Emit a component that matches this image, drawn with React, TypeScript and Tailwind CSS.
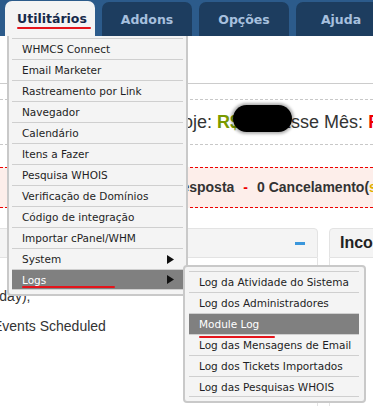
import React from 'react'

const menuItems = [
  'WHMCS Connect',
  'Email Marketer',
  'Rastreamento por Link',
  'Navegador',
  'Calendário',
  'Itens a Fazer',
  'Pesquisa WHOIS',
  'Verificação de Domínios',
  'Código de integração',
  'Importar cPanel/WHM',
]

const logItems = [
  'Log da Atividade do Sistema',
  'Log dos Administradores',
  'Module Log',
  'Log das Mensagens de Email',
  'Log dos Tickets Importados',
  'Log das Pesquisas WHOIS',
]

const tahoma = { fontFamily: '"DejaVu Sans", Verdana, sans-serif' }

function Arrow() {
  return (
    <svg width="7" height="9" viewBox="0 0 7 9">
      <polygon points="0,0 7,4.5 0,9" fill="#111" />
    </svg>
  )
}

function Tab({ label, active }: { label: string; active?: boolean }) {
  if (active) {
    return (
      <div className="relative h-[35px] w-[90px] shrink-0 rounded-t-[7px] bg-[#f4f4f4] pl-[12px] pt-[9px] text-[12.5px] font-bold text-[#16294a]">
        {label}
        {/* red marker stroke drawn over the screenshot */}
        <span className="absolute left-[12px] top-[26px] h-[2px] w-[74px] rounded-full bg-[#e5141b]" />
      </div>
    )
  }
  return (
    <div className="flex h-[34px] w-[90px] shrink-0 justify-center rounded-t-[7px] bg-[#1d3d5f] pt-[9px] text-[12.5px] font-bold text-[#a7c0de]">
      {label}
    </div>
  )
}

export default function App() {
  return (
    <div
      className="relative h-[406px] w-[373px] overflow-hidden bg-white text-[#333]"
      style={{ fontFamily: '"Liberation Sans", Arial, sans-serif' }}
    >
      {/* Top nav */}
      <nav className="flex h-[36px] items-end gap-[7px] bg-[#2c5b8b] pl-[5px]" style={tahoma}>
        <Tab label="Utilitários" active />
        <Tab label="Addons" />
        <Tab label="Opções" />
        <Tab label="Ajuda" />
      </nav>

      {/* Page content */}
      <div className="h-[48px] border-b border-[#cccccc]" />

      <div className="relative mt-[15px] h-[46px] whitespace-nowrap border-y border-dashed border-[#c8c8c8] pl-[105px] text-[18px] leading-[44px]">
        Vendas Hoje: <span className="font-bold text-[#7a9a00]">R$</span>
        <span className="inline-block w-[34px]" /> Esse Mês: <span className="font-bold text-[#e00]">R$</span>
        {/* redaction smudge */}
        <span className="absolute left-[233px] top-[5px] h-[27px] w-[59px] rounded-[14px] bg-black shadow-[0_0_3px_2px_rgba(0,0,0,0.3)]" />
      </div>

      <div className="mt-[22px] h-[41px] whitespace-nowrap border-y border-dashed border-[#e00] bg-[#fdeeea] pl-[85px] text-[14px] font-bold leading-[39px]">
        Aguardando Resposta
        <span className="mx-[9px] text-[#e00]">-</span>
        0 Cancelamento(<span className="text-[#e0b000]">s</span>)
      </div>

      <div className="-ml-[12px] mt-[20px] flex gap-[11px]">
        <div className="w-[330px] shrink-0">
          <div className="flex h-[30px] items-center justify-end rounded-t-[4px] border border-[#e3e3e3] bg-[#f4f4f4] pr-[12px]">
            <span className="h-[3px] w-[10px] bg-[#3a97dc]" />
          </div>
          <div className="h-[160px] border-x border-[#e3e3e3] pl-[4px] pt-[23px] text-[14px] leading-[30px]">
            <div className="-ml-[10px]">(0 day),</div>
            <div>Events Scheduled</div>
          </div>
        </div>
        <div className="w-[200px] shrink-0">
          <div className="flex h-[30px] items-center whitespace-nowrap rounded-t-[4px] border border-[#e3e3e3] bg-[#f4f4f4] pl-[10px] text-[16px] font-bold text-[#222]">
            Incompletos
          </div>
          <div className="h-[160px] border-x border-[#e3e3e3]" />
        </div>
      </div>

      {/* Utilitários dropdown */}
      <div
        className="absolute left-[7px] top-[36px] w-[181px] whitespace-nowrap rounded-b-[4px] border-x-2 border-b-2 border-[#c9c9c9] bg-[#f4f4f4] px-[3px] pb-[4px] pt-[2px] text-[10.5px] text-[#1e1e24]"
        style={tahoma}
      >
        {menuItems.map(item => (
          <div key={item} className="h-[21px] border-t border-[#cfcfcf] pl-[10px] leading-[20px]">
            {item}
          </div>
        ))}
        <div className="flex h-[21px] items-center justify-between border-t border-[#cfcfcf] pl-[10px] pr-[9px] leading-[20px]">
          System
          <Arrow />
        </div>
        <div className="relative flex h-[21px] items-center justify-between border-y border-[#cfcfcf] bg-[#808080] pl-[10px] pr-[9px] leading-[20px] text-white">
          Logs
          <Arrow />
          <span className="absolute left-[10px] top-[16px] h-[2px] w-[93px] rounded-full bg-[#e5141b]" />
        </div>
      </div>

      {/* Logs submenu */}
      <div
        className="absolute left-[183px] top-[265px] w-[183px] whitespace-nowrap rounded-[4px] border-2 border-[#c9c9c9] bg-[#f4f4f4] pb-[4px] pl-[4px] pr-[5px] pt-[4px] text-[10.5px] text-[#1e1e24]"
        style={tahoma}
      >
        {logItems.map((item, i) => {
          const active = item === 'Module Log'
          return (
            <div
              key={item}
              className={`relative h-[21px] border-t border-[#cfcfcf] pl-[10px] leading-[20px] ${i === logItems.length - 1 ? 'border-b' : ''} ${active ? 'bg-[#808080] text-white' : ''}`}
            >
              {item}
              {active && <span className="absolute left-[10px] top-[22px] z-10 h-[2px] w-[76px] rounded-full bg-[#e5141b]" />}
            </div>
          )
        })}
      </div>
    </div>
  )
}
